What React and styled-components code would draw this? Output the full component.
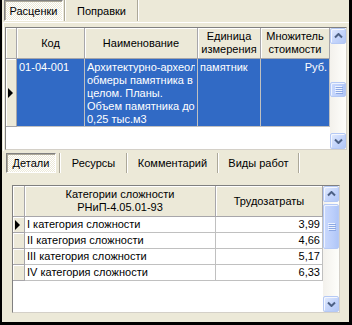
import React from 'react';
import styled, { createGlobalStyle, css } from 'styled-components';

const GlobalStyle = createGlobalStyle`
  html, body { margin: 0; padding: 0; background: #000; }
  body { width: 352px; height: 325px; overflow: hidden; }
  * { box-sizing: border-box; }
`;

const Frame = styled.div`
  margin-left: 2px;
  width: 347px;
  height: 322px;
  background: #ece9d8;
  font-family: "Liberation Sans", Arial, sans-serif;
  font-size: 11px;
  color: #000;
  display: flex;
  flex-direction: column;
`;

const TabBar = styled.div`
  display: flex;
  align-items: flex-start;
  height: ${p => p.h}px;
  padding: ${p => p.pt}px 0 0 ${p => p.pl}px;
  flex-shrink: 0;
`;

const Tab = styled.div`
  width: ${p => p.w}px;
  height: ${p => p.th}px;
  display: flex;
  align-items: center;
  justify-content: center;
  white-space: nowrap;
  ${p => p.active && css`
    border: 1px solid;
    border-color: #808080 #fff #fff #808080;
    box-shadow: inset 1px 1px 0 #aca899;
    background: repeating-conic-gradient(#fff 0 25%, #ece9d8 0 50%) 0 0 / 2px 2px;
  `}
`;

const Sep = styled.div`
  width: 2px;
  height: ${p => p.th}px;
  margin-left: ${p => p.ml || 0}px;
  border-left: 1px solid #aca899;
  border-right: 1px solid #fff;
`;

const TopPage = styled.div`
  margin-left: 1px;
  height: 129px;
  border-top: 1px solid #fff;
  border-left: 1px solid #fff;
  padding: 4px 2px 1px 1px;
`;

const BottomPage = styled.div`
  flex: 1;
  padding: 11px 0 0 10px;
`;

const Grid = styled.div`
  width: ${p => p.w}px;
  height: ${p => p.h}px;
  border: 1px solid;
  border-color: #808080 #d4d0c8 #d4d0c8 #808080;
  display: flex;
  background: #fff;
`;

const Table = styled.div`
  flex: 1;
  display: flex;
  flex-direction: column;
  overflow: hidden;
`;

const Row = styled.div`
  display: grid;
  grid-template-columns: ${p => p.cols};
  height: ${p => p.h}px;
  flex-shrink: 0;
`;

const HeadCell = styled.div`
  background: #ece9d8;
  border-right: 1px solid #a7a6aa;
  border-bottom: 1px solid #a7a6aa;
  box-shadow: inset 1px 1px 0 #fff;
  display: flex;
  align-items: center;
  justify-content: center;
  text-align: center;
  line-height: 13px;
  white-space: nowrap;
  overflow: hidden;
`;

const Indicator = styled(HeadCell)`
  justify-content: flex-start;
  padding-left: 2px;
`;

const Arrow = styled.div`
  width: 0;
  height: 0;
  border-left: 5px solid #000;
  border-top: 5px solid transparent;
  border-bottom: 5px solid transparent;
`;

const Cell = styled.div`
  border-right: 1px solid #c0c0c0;
  border-bottom: 1px solid #c0c0c0;
  background: ${p => (p.sel ? '#316ac5' : '#fff')};
  color: ${p => (p.sel ? '#fff' : '#000')};
  padding: ${p => (p.multi ? '2px 2px 0 2px' : '0 2px')};
  text-align: ${p => (p.right ? 'right' : 'left')};
  line-height: ${p => (p.multi ? '13px' : '15px')};
  white-space: nowrap;
  overflow: hidden;
`;

const Line = styled.div`
  white-space: nowrap;
  overflow: hidden;
`;

const ScrollBar = styled.div`
  width: 16px;
  display: flex;
  flex-direction: column;
  background: linear-gradient(90deg, #f3f1ec, #fefefb);
`;

const ScrollBtn = styled.div`
  height: 16px;
  flex-shrink: 0;
  border: 1px solid #b5c9f5;
  border-radius: 2px;
  background: linear-gradient(135deg, #e3ebfd 0%, #c6d6fb 50%, #b3c8f6 100%);
  box-shadow: inset 1px 1px 0 #f4f7fe;
  display: flex;
  align-items: center;
  justify-content: center;
`;

const Track = styled.div`
  flex: 1;
  display: flex;
  flex-direction: column;
`;

const Thumb = styled.div`
  height: ${p => p.h}px;
  margin-top: ${p => p.top}px;
  border: 1px solid #b5c9f5;
  border-radius: 2px;
  background: linear-gradient(90deg, #c9d8fc 0%, #bccffb 60%, #b0c6f7 100%);
  box-shadow: inset 1px 1px 0 #eef3fe;
  display: flex;
  flex-direction: column;
  align-items: center;
  justify-content: center;
  gap: 1px;
`;

const Grip = styled.div`
  width: 7px;
  height: 1px;
  background: #eef3fe;
  box-shadow: 1px 1px 0 #8ca8e4;
`;

const Chevron = ({ down }) => (
  <svg width="9" height="6" viewBox="0 0 9 6">
    <path
      d={down ? 'M1 1.5 L4.5 5 L8 1.5' : 'M1 4.5 L4.5 1 L8 4.5'}
      fill="none"
      stroke="#4d6185"
      strokeWidth="2"
    />
  </svg>
);

const Scroll = ({ thumbTop, thumbH }) => (
  <ScrollBar>
    <ScrollBtn><Chevron /></ScrollBtn>
    <Track>
      <Thumb top={thumbTop} h={thumbH}>
        {thumbH > 12 && (<><Grip /><Grip /><Grip /><Grip /></>)}
      </Thumb>
    </Track>
    <ScrollBtn><Chevron down /></ScrollBtn>
  </ScrollBar>
);

const topCols = '11px 68px 113px 63px 69px';
const bottomCols = '12px 191px 107px';

const categories = [
  ['I категория сложности', '3,99'],
  ['II категория сложности', '4,66'],
  ['III категория сложности', '5,17'],
  ['IV категория сложности', '6,33'],
];

export default function App() {
  return (
    <>
      <GlobalStyle />
      <Frame>
        <TabBar h={22} pt={0} pl={2}>
          <Tab w={59} th={21} active>Расценки</Tab>
          <Sep th={21} ml={1} />
          <Tab w={71} th={21}>Поправки</Tab>
          <Sep th={21} />
        </TabBar>
        <TopPage>
          <Grid w={342} h={123}>
            <Table>
              <Row cols={topCols} h={31}>
                <Indicator />
                <HeadCell>Код</HeadCell>
                <HeadCell>Наименование</HeadCell>
                <HeadCell>Единица<br />измерения</HeadCell>
                <HeadCell>Множитель<br />стоимости</HeadCell>
              </Row>
              <Row cols={topCols} h={68}>
                <Indicator><Arrow /></Indicator>
                <Cell sel multi>01-04-001</Cell>
                <Cell sel multi>
                  <Line>Архитектурно-археологические</Line>
                  <Line>обмеры памятника в</Line>
                  <Line>целом. Планы.</Line>
                  <Line>Объем памятника до</Line>
                  <Line>0,25 тыс.м3</Line>
                </Cell>
                <Cell sel multi>памятник</Cell>
                <Cell sel multi right>Руб.</Cell>
              </Row>
            </Table>
            <Scroll thumbTop={38} thumbH={15} />
          </Grid>
        </TopPage>
        <TabBar h={23} pt={2} pl={4}>
          <Tab w={50} th={20} active>Детали</Tab>
          <Sep th={20} ml={3} />
          <Tab w={65} th={20}>Ресурсы</Tab>
          <Sep th={20} />
          <Tab w={89} th={20}>Комментарий</Tab>
          <Sep th={20} />
          <Tab w={79} th={20}>Виды работ</Tab>
          <Sep th={20} />
        </TabBar>
        <BottomPage>
          <Grid w={328} h={128}>
            <Table>
              <Row cols={bottomCols} h={31}>
                <Indicator />
                <HeadCell>Категории сложности<br />РНиП-4.05.01-93</HeadCell>
                <HeadCell>Трудозатраты</HeadCell>
              </Row>
              {categories.map(([name, value], i) => (
                <Row cols={bottomCols} h={16} key={name}>
                  <Indicator>{i === 0 && <Arrow />}</Indicator>
                  <Cell>{name}</Cell>
                  <Cell right>{value}</Cell>
                </Row>
              ))}
            </Table>
            <Scroll thumbTop={2} thumbH={45} />
          </Grid>
        </BottomPage>
      </Frame>
    </>
  );
}
